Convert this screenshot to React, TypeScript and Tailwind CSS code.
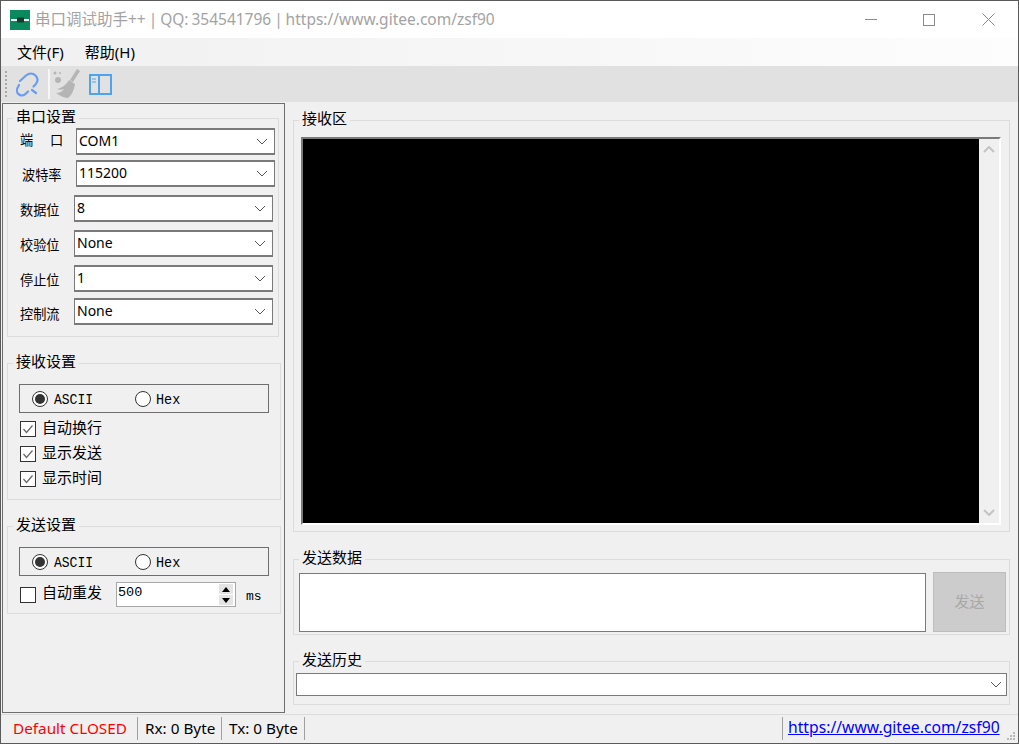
import { ReactNode } from 'react';

const Chevron = () => (
  <svg width="12" height="7" viewBox="0 0 12 7" className="shrink-0">
    <path d="M1 1l5 5 5-5" fill="none" stroke="#555" strokeWidth="1" />
  </svg>
);

// group box with the caption sitting on the top line
function Group({ title, className, children }: { title: string; className: string; children: ReactNode }) {
  return (
    <fieldset className={`border border-[#dcdcdc] ${className}`}>
      <legend className="ml-[5px] px-[3px] text-[15px] leading-[20px] text-black">
        <span className="block -translate-y-[2px]">{title}</span>
      </legend>
      {children}
    </fieldset>
  );
}

function Combo({ value, className }: { value: string; className: string }) {
  return (
    <div className={`flex h-[27px] items-center justify-between border-2 border-[#7a7a7a] border-x-[1.5px] bg-white pb-[2px] pl-[2px] pr-[6px] text-[14px] text-black ${className}`}>
      <span>{value}</span>
      <span className="translate-y-px"><Chevron /></span>
    </div>
  );
}

function Field({ label, value, labelClass, comboClass, rowClass }: { label: string; value: string; labelClass: string; comboClass: string; rowClass: string }) {
  return (
    <div className={`flex items-center ${rowClass}`}>
      <span className={`shrink-0 text-[13.200px] text-black ${labelClass}`}>{label}</span>
      <Combo value={value} className={comboClass} />
    </div>
  );
}

const Check = ({ checked }: { checked: boolean }) => (
  <span className="flex h-[16px] w-[16px] shrink-0 items-center justify-center border border-[#333] bg-white">
    {checked && (
      <svg width="12" height="10" viewBox="0 0 12 10">
        <path d="M1.5 5l3 3.5 6-7" fill="none" stroke="#666" strokeWidth="1.2" />
      </svg>
    )}
  </span>
);

function CheckRow({ label, checked, className }: { label: string; checked: boolean; className: string }) {
  return (
    <div className={`ml-[12px] flex h-[20px] items-center gap-[6px] text-[15px] text-black ${className}`}>
      <Check checked={checked} />
      <span className="-translate-y-[2px]">{label}</span>
    </div>
  );
}

const Radio = ({ checked }: { checked: boolean }) => (
  <span className="flex h-[16px] w-[16px] shrink-0 items-center justify-center rounded-full border border-[#333] bg-white">
    {checked && <span className="h-[10px] w-[10px] rounded-full bg-[#333]" />}
  </span>
);

function RadioBox({ className }: { className: string }) {
  return (
    <div className={`ml-[11px] flex h-[29px] w-[250px] items-center border border-[#6e6e6e] pl-[12px] pt-[1px] font-['Liberation_Mono',monospace] text-[13px] text-black ${className}`}>
      <Radio checked />
      <span className="ml-[6px] w-[81px] translate-y-[2px] scale-y-110">ASCII</span>
      <Radio checked={false} />
      <span className="ml-[5px] translate-y-[2px] scale-y-110 text-[13.500px]">Hex</span>
    </div>
  );
}

const Sep = ({ className }: { className: string }) => <span className={`h-[23px] w-px shrink-0 bg-[#a0a0a0] ${className}`} />;

export default function App() {
  return (
    <div className="flex h-[744px] w-[1019px] flex-col overflow-hidden border border-[#5a5a5a] bg-[#f0f0f0] [font-family:'Noto_Sans','Noto_Sans_CJK_SC',sans-serif]">
      {/* title bar */}
      <div className="flex h-[37px] shrink-0 items-center bg-white pl-[9px]">
        <svg width="20" height="20" viewBox="0 0 20 20" className="mt-px shrink-0">
          <rect width="20" height="20" fill="#0a8a5c" />
          <path d="M1 10h18" stroke="#fff" strokeWidth="2" />
          <rect x="7" y="7.5" width="7" height="5" fill="#1a3a2c" />
        </svg>
        <span className="ml-[5px] text-[15.500px] text-[#a3a3a3] [word-spacing:-1.100px]">串口调试助手++ | QQ: 354541796 | https://www.gitee.com/zsf90</span>
        <div className="ml-auto flex items-center pr-[23px]">
          <span className="h-px w-[12px] bg-[#8a8a8a]" />
          <span className="ml-[46px] h-[12px] w-[12px] border border-[#8a8a8a]" />
          <svg width="13" height="13" viewBox="0 0 13 13" className="ml-[47px]">
            <path d="M.5.5l12 12M12.5.5l-12 12" stroke="#8a8a8a" strokeWidth="1" />
          </svg>
        </div>
      </div>

      {/* menu */}
      <div className="flex h-[28px] shrink-0 items-center bg-gradient-to-r from-[#f0f0f0] to-[#fdfdfd] pl-[16px] pt-px text-[15px] text-black">
        <span>文件(F)</span>
        <span className="ml-[21px]">帮助(H)</span>
      </div>

      {/* toolbar */}
      <div className="flex h-[36px] shrink-0 items-center bg-[#e1e1e1] pl-[4px]">
        <span className="h-[26px] w-[2px] border-l-2 border-dotted border-[#a8a8a8]" />
        <svg width="24" height="25" viewBox="0 0 24 25" className="ml-[9px]" fill="none" stroke="#6a9cf0" strokeWidth="2.200" strokeLinecap="round">
          <path d="M4 9l6-5.500c3-2.500 7-2.500 9.500 0s2.500 6 0 9l-2 2" />
          <path d="M3 13l-1 2c-2 3-1 6 1 7.500s5 1 7-1l2-2" />
          <path d="M16 18l4 3" />
        </svg>
        <span className="ml-[8px] h-[30px] w-[2px] bg-[#f6f6f6]" />
        <svg width="28" height="30" viewBox="0 0 28 30" className="ml-[3px]" fill="#b5b5b5">
          <path d="M24 0l3 2-7 11-3-2z" />
          <path d="M16 11l6 4c-1 6-3 11-7 14-3 0-8-2-12-5 4 0 7-2 8-4-2 1-5 1-7 0 5-1 10-5 12-9z" />
          <circle cx="5" cy="11" r="3" />
          <circle cx="2" cy="4" r="1.500" />
          <circle cx="7" cy="4" r="1" />
        </svg>
        <svg width="23" height="21" viewBox="0 0 23 21" className="ml-[8px]" fill="none" stroke="#4ea3ee" strokeWidth="2">
          <rect x="1" y="1" width="21" height="19" />
          <path d="M10 1v19" />
          <path d="M3 5h4M3 8h4" stroke="#7fb9ee" strokeWidth="1.500" />
        </svg>
      </div>

      {/* main area */}
      <div className="flex h-[612px] shrink-0">
        {/* left panel */}
        <div className="ml-px mt-px h-[610px] w-[283px] shrink-0 border border-[#6e6e6e] pl-[4px] pt-[4px]">
          <Group title="串口设置" className="w-[272px] pb-[11px]">
            <Field label="端　口" value="COM1" rowClass="" labelClass="ml-[12px] w-[56px] tracking-[1.800px] -translate-y-px" comboClass="w-[199px]" />
            <Field label="波特率" value="115200" rowClass="mt-[5px]" labelClass="ml-[14px] w-[54px] translate-y-[2px]" comboClass="w-[199px]" />
            <Field label="数据位" value="8" rowClass="mt-[8px]" labelClass="ml-[12px] w-[54px] translate-y-[2px]" comboClass="w-[199px]" />
            <Field label="校验位" value="None" rowClass="mt-[8px]" labelClass="ml-[12px] w-[54px] translate-y-[2px]" comboClass="w-[199px]" />
            <Field label="停止位" value="1" rowClass="mt-[8px]" labelClass="ml-[12px] w-[54px] translate-y-[2px]" comboClass="w-[199px]" />
            <Field label="控制流" value="None" rowClass="mt-[6px]" labelClass="ml-[12px] w-[54px] translate-y-[3px]" comboClass="w-[199px]" />
          </Group>

          <Group title="接收设置" className="mt-[16px] w-[274px] pb-[10px]">
            <RadioBox className="mt-[11px]" />
            <CheckRow label="自动换行" checked className="mt-[6px]" />
            <CheckRow label="显示发送" checked className="mt-[5px]" />
            <CheckRow label="显示时间" checked className="mt-[5px]" />
          </Group>

          <Group title="发送设置" className="mt-[16px] w-[274px] pb-[6px]">
            <RadioBox className="mt-[11px]" />
            <div className="ml-[12px] mt-[6px] flex h-[25px] items-center text-[15px] text-black">
              <Check checked={false} />
              <span className="ml-[6px] -translate-y-[2px]">自动重发</span>
              <div className="ml-[14px] flex h-[25px] w-[120px] items-center justify-between border border-[#a8a8a8] bg-white pl-[1px] pr-[2px] text-[13.500px]">
                <span className="-translate-y-px font-['Liberation_Mono',monospace]">500</span>
                <div className="flex flex-col gap-px">
                  <span className="flex h-[10px] w-[14px] items-center justify-center bg-[#e4e4e4]">
                    <span className="h-0 w-0 border-x-[4px] border-b-[5px] border-x-transparent border-b-black" />
                  </span>
                  <span className="flex h-[10px] w-[14px] items-center justify-center bg-[#e4e4e4]">
                    <span className="h-0 w-0 border-x-[4px] border-t-[5px] border-x-transparent border-t-black" />
                  </span>
                </div>
              </div>
              <span className="ml-[10px] translate-y-[2px] font-['Liberation_Mono',monospace] text-[13px]">ms</span>
            </div>
          </Group>
        </div>

        {/* right column */}
        <div className="ml-[8px] w-[717px] shrink-0 pt-[8px]">
          <Group title="接收区" className="h-[422px] pt-[7px]">
            <div className="ml-[7px] flex h-[388px] w-[700px] border-y-2 border-x-2 border-[#7a7a7a] border-r-white border-b-white">
              <div className="flex-1 bg-black" />
              <div className="flex w-[20px] flex-col items-center justify-between bg-[#f0f0f0] py-[7px]">
                <svg width="12" height="7" viewBox="0 0 12 7"><path d="M1 6l5-5 5 5" fill="none" stroke="#c4c4c4" strokeWidth="2" /></svg>
                <svg width="12" height="7" viewBox="0 0 12 7"><path d="M1 1l5 5 5-5" fill="none" stroke="#c4c4c4" strokeWidth="2" /></svg>
              </div>
            </div>
          </Group>

          <Group title="发送数据" className="mt-[17px] pb-[2px]">
            <div className="flex items-start pl-[5px]">
              <div className="mt-[4px] h-[59px] w-[627px] border border-[#7a7a7a] bg-white" />
              <button className="ml-[7px] mt-[3px] h-[60px] w-[73px] border border-[#bdbdbd] bg-[#cccccc] pb-[2px] text-[15px] text-[#a8a8a8]">发送</button>
            </div>
          </Group>

          <Group title="发送历史" className="mt-[16px] pb-[8px]">
            <div className="ml-[2px] mt-[2px] flex h-[23px] w-[711px] items-center justify-end border border-[#7a7a7a] bg-white pr-[4px]">
              <Chevron />
            </div>
          </Group>
        </div>
      </div>

      {/* status bar */}
      <div className="relative flex h-[29px] shrink-0 items-center border-t border-[#dcdcdc] pb-[2px] text-[15.300px] text-black">
        <span className="ml-[12px] w-[124px] text-[#ff0000]">Default CLOSED</span>
        <Sep className="" />
        <span className="ml-[7px] w-[76px]">Rx: 0 Byte</span>
        <Sep className="" />
        <span className="ml-[7px] w-[75px]">Tx: 0 Byte</span>
        <Sep className="" />
        <Sep className="ml-[477px]" />
        <span className="ml-[5px] text-[15.700px] text-[#0000ff] underline">https://www.gitee.com/zsf90</span>
        {/* size grip */}
        <svg width="10" height="10" viewBox="0 0 10 10" className="absolute bottom-[2px] right-[2px]" fill="#b8b8b8">
          <rect x="7" y="1" width="2" height="2" />
          <rect x="4" y="4" width="2" height="2" />
          <rect x="7" y="4" width="2" height="2" />
          <rect x="1" y="7" width="2" height="2" />
          <rect x="4" y="7" width="2" height="2" />
          <rect x="7" y="7" width="2" height="2" />
        </svg>
      </div>
    </div>
  );
}
